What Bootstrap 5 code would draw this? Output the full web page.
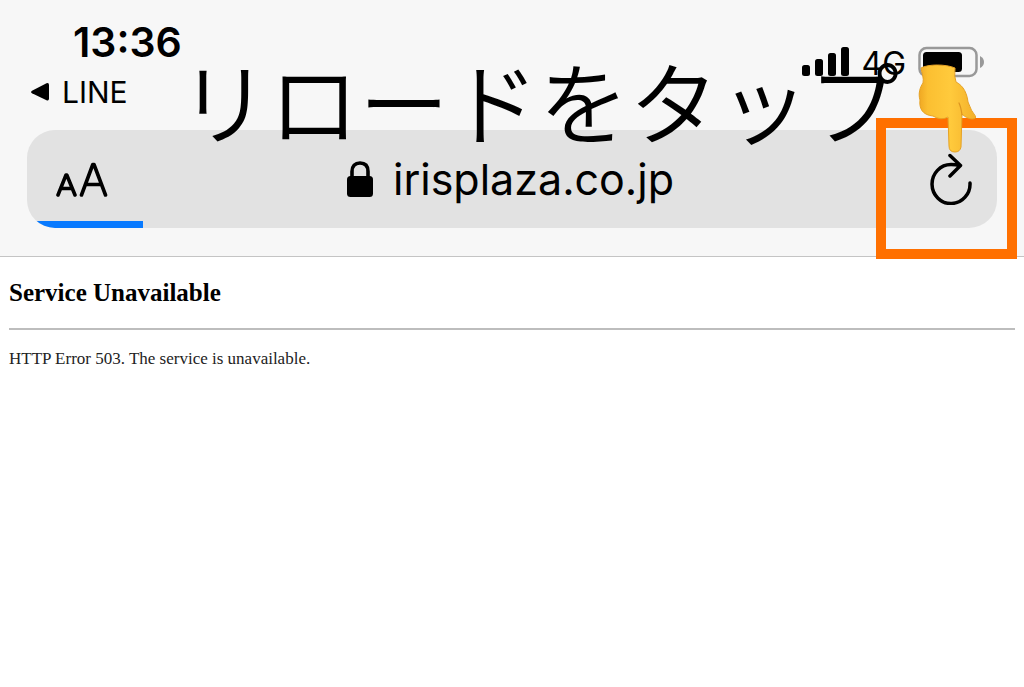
<!DOCTYPE html>
<html lang="ja">
<head>
<meta charset="utf-8">
<meta name="viewport" content="width=device-width, initial-scale=1">
<title>Service Unavailable</title>
<link href="https://cdn.jsdelivr.net/npm/bootstrap@5.3.0/dist/css/bootstrap.min.css" rel="stylesheet">
<style>
body { background: #fff; color: #000; font-family: Inter, "Noto Sans CJK JP", sans-serif; }
.browser-top { background: #f7f7f7; border-bottom: 1px solid #c4c4c4; padding: 20px 27px 28px; }
.status-row { height: 110px; }
.clock { font-size: 41px; line-height: 44px; font-weight: 600; padding-left: 46px; }
.back-link { font-size: 30px; line-height: 56px; gap: 12px; padding-left: 3px; }
.signals { padding: 26px 12px 0 0; gap: 12px; }
.network { font-size: 32px; line-height: 36px; }
.address { background: #e2e2e2; border-radius: 28px; height: 98px; padding: 0 24px 0 29px; }
.address button { color: #000; }
.reload { width: 60px; }
.host { font-size: 43px; line-height: 56px; gap: 20px; }
.load-bar { height: 7px; background: transparent; border-radius: 0; }
.load-bar .progress-bar { background: #087aff; }
.caption-text { top: 33px; left: 179px; font-size: 90px; line-height: 132px; font-weight: 350; font-family: "Noto Sans CJK JP", sans-serif; }
.tap-frame { top: 118px; right: 7px; width: 141px; height: 141px; border: 10px solid #ff7000; }
.hand { top: 64px; right: 48px; }
.error-page { font-family: "Liberation Serif", serif; padding: 20px 9px; }
.error-page h1 { font-size: 25px; line-height: 32px; font-weight: 700; margin: 0 0 19px; }
.error-page hr { margin: 0 0 19px; border-top: 2px solid #bdbdbd; opacity: 1; }
.error-page p { font-size: 17px; line-height: 20px; color: #222; margin: 0; }
</style>
<script src="https://cdn.jsdelivr.net/npm/bootstrap@5.3.0/dist/js/bootstrap.bundle.min.js"></script>
</head>
<body>
<header class="browser-top position-relative">
  <div class="status-row d-flex justify-content-between align-items-start">
    <div>
      <div class="clock">13:36</div>
      <a href="#" class="back-link d-flex align-items-center text-reset text-decoration-none">
        <svg width="20" height="20" viewBox="0 0 20 20" aria-hidden="true"><path d="M2 8.700 16.500 1.200Q19 0.300 19 3V16.500Q19 19.300 16.500 18.300L2 11.200Q.1 10 2 8.700Z"/></svg>
        <span>LINE</span>
      </a>
    </div>
    <div class="signals d-flex align-items-start">
      <svg width="48" height="31" viewBox="0 0 48 31" aria-label="電波"><rect x="1" y="19" width="8" height="11" rx="2.500"/><rect x="14" y="13" width="8" height="17" rx="2.500"/><rect x="27" y="7" width="8" height="23" rx="2.500"/><rect x="40" y="1" width="8" height="29" rx="2.500"/></svg>
      <span class="network">4G</span>
      <svg width="67" height="32" viewBox="0 0 67 32" aria-label="バッテリー"><rect x="1.500" y="2" width="57" height="28" rx="7" fill="none" stroke="#999" stroke-width="2.500"/><rect x="5" y="6" width="39" height="20" rx="3.500"/><path d="M62 10q4 2 4 6t-4 6z" fill="#999"/></svg>
    </div>
  </div>
  <div class="address d-flex align-items-center position-relative overflow-hidden">
    <button type="button" class="btn p-0 border-0" aria-label="文字サイズ">
      <svg class="d-block" width="52" height="36" viewBox="0 0 52 36" fill="none" stroke="#000" stroke-width="3.600" stroke-linecap="round" stroke-linejoin="round"><path d="M2 34 10 14h.800L19 34M5 27.500h11"/><path d="M25.500 34 36.800 3.500h1.200L49.500 34M29.500 23.500h15.500"/></svg>
    </button>
    <div class="host d-flex align-items-center justify-content-center flex-grow-1">
      <svg width="26" height="36" viewBox="0 0 26 36" aria-hidden="true"><rect x="0" y="15" width="26" height="21" rx="3.500"/><path d="M5 17V10.500C5 5 8 2 13 2s8 3 8 8.500V17" fill="none" stroke="#000" stroke-width="3.600"/></svg>
      <span>irisplaza.co.jp</span>
    </div>
    <button type="button" class="reload btn p-0 border-0 text-end" aria-label="再読み込み">
      <svg width="44" height="52" viewBox="0 0 44 52" fill="none" stroke="#000" stroke-width="3.500" stroke-linecap="round" stroke-linejoin="round"><path d="M41 30A19 19.500 0 1 1 22 11.500Q27 11.500 31 12.500M21 2.500 31.500 12.500 21 23"/></svg>
    </button>
    <div class="load-bar progress position-absolute bottom-0 start-0 w-100" role="progressbar" aria-label="読み込み" aria-valuenow="12" aria-valuemin="0" aria-valuemax="100"><div class="progress-bar" style="width:12%"></div></div>
  </div>
  <div class="caption-text position-absolute text-nowrap">リロードをタップ</div>
  <div class="tap-frame position-absolute pe-none"></div>
  <svg class="hand position-absolute pe-none" width="58" height="90" viewBox="0 0 58 90" aria-label="下向きの指">
    <defs>
      <linearGradient id="skin" x1="0" y1="0" x2="1" y2="0"><stop offset="0" stop-color="#f0a823"/><stop offset=".15" stop-color="#fbbf31"/><stop offset=".55" stop-color="#ffca3c"/><stop offset="1" stop-color="#f3b02a"/></linearGradient>
    </defs>
    <path d="M3 4C10 0 28 0 37 4Q36 13 38 18C46 22 49 30 50 38Q53 47 58 53C57 56 50 56 44 50L43 83Q42 88 37 88 31 88 31 82L30 53Q23 57 15 52C4 51 1 44 2 36 0 30 2 23 5 19 6 14 4 10 3 4Z" fill="url(#skin)" stroke="#e6a225" stroke-width="1"/>
    <path d="M44 51Q43 43 41 39" fill="none" stroke="#dc9520" stroke-width="1.200" stroke-linecap="round"/>
  </svg>
</header>
<main class="error-page">
  <h1>Service Unavailable</h1>
  <hr>
  <p>HTTP Error 503. The service is unavailable.</p>
</main>
</body>
</html>
